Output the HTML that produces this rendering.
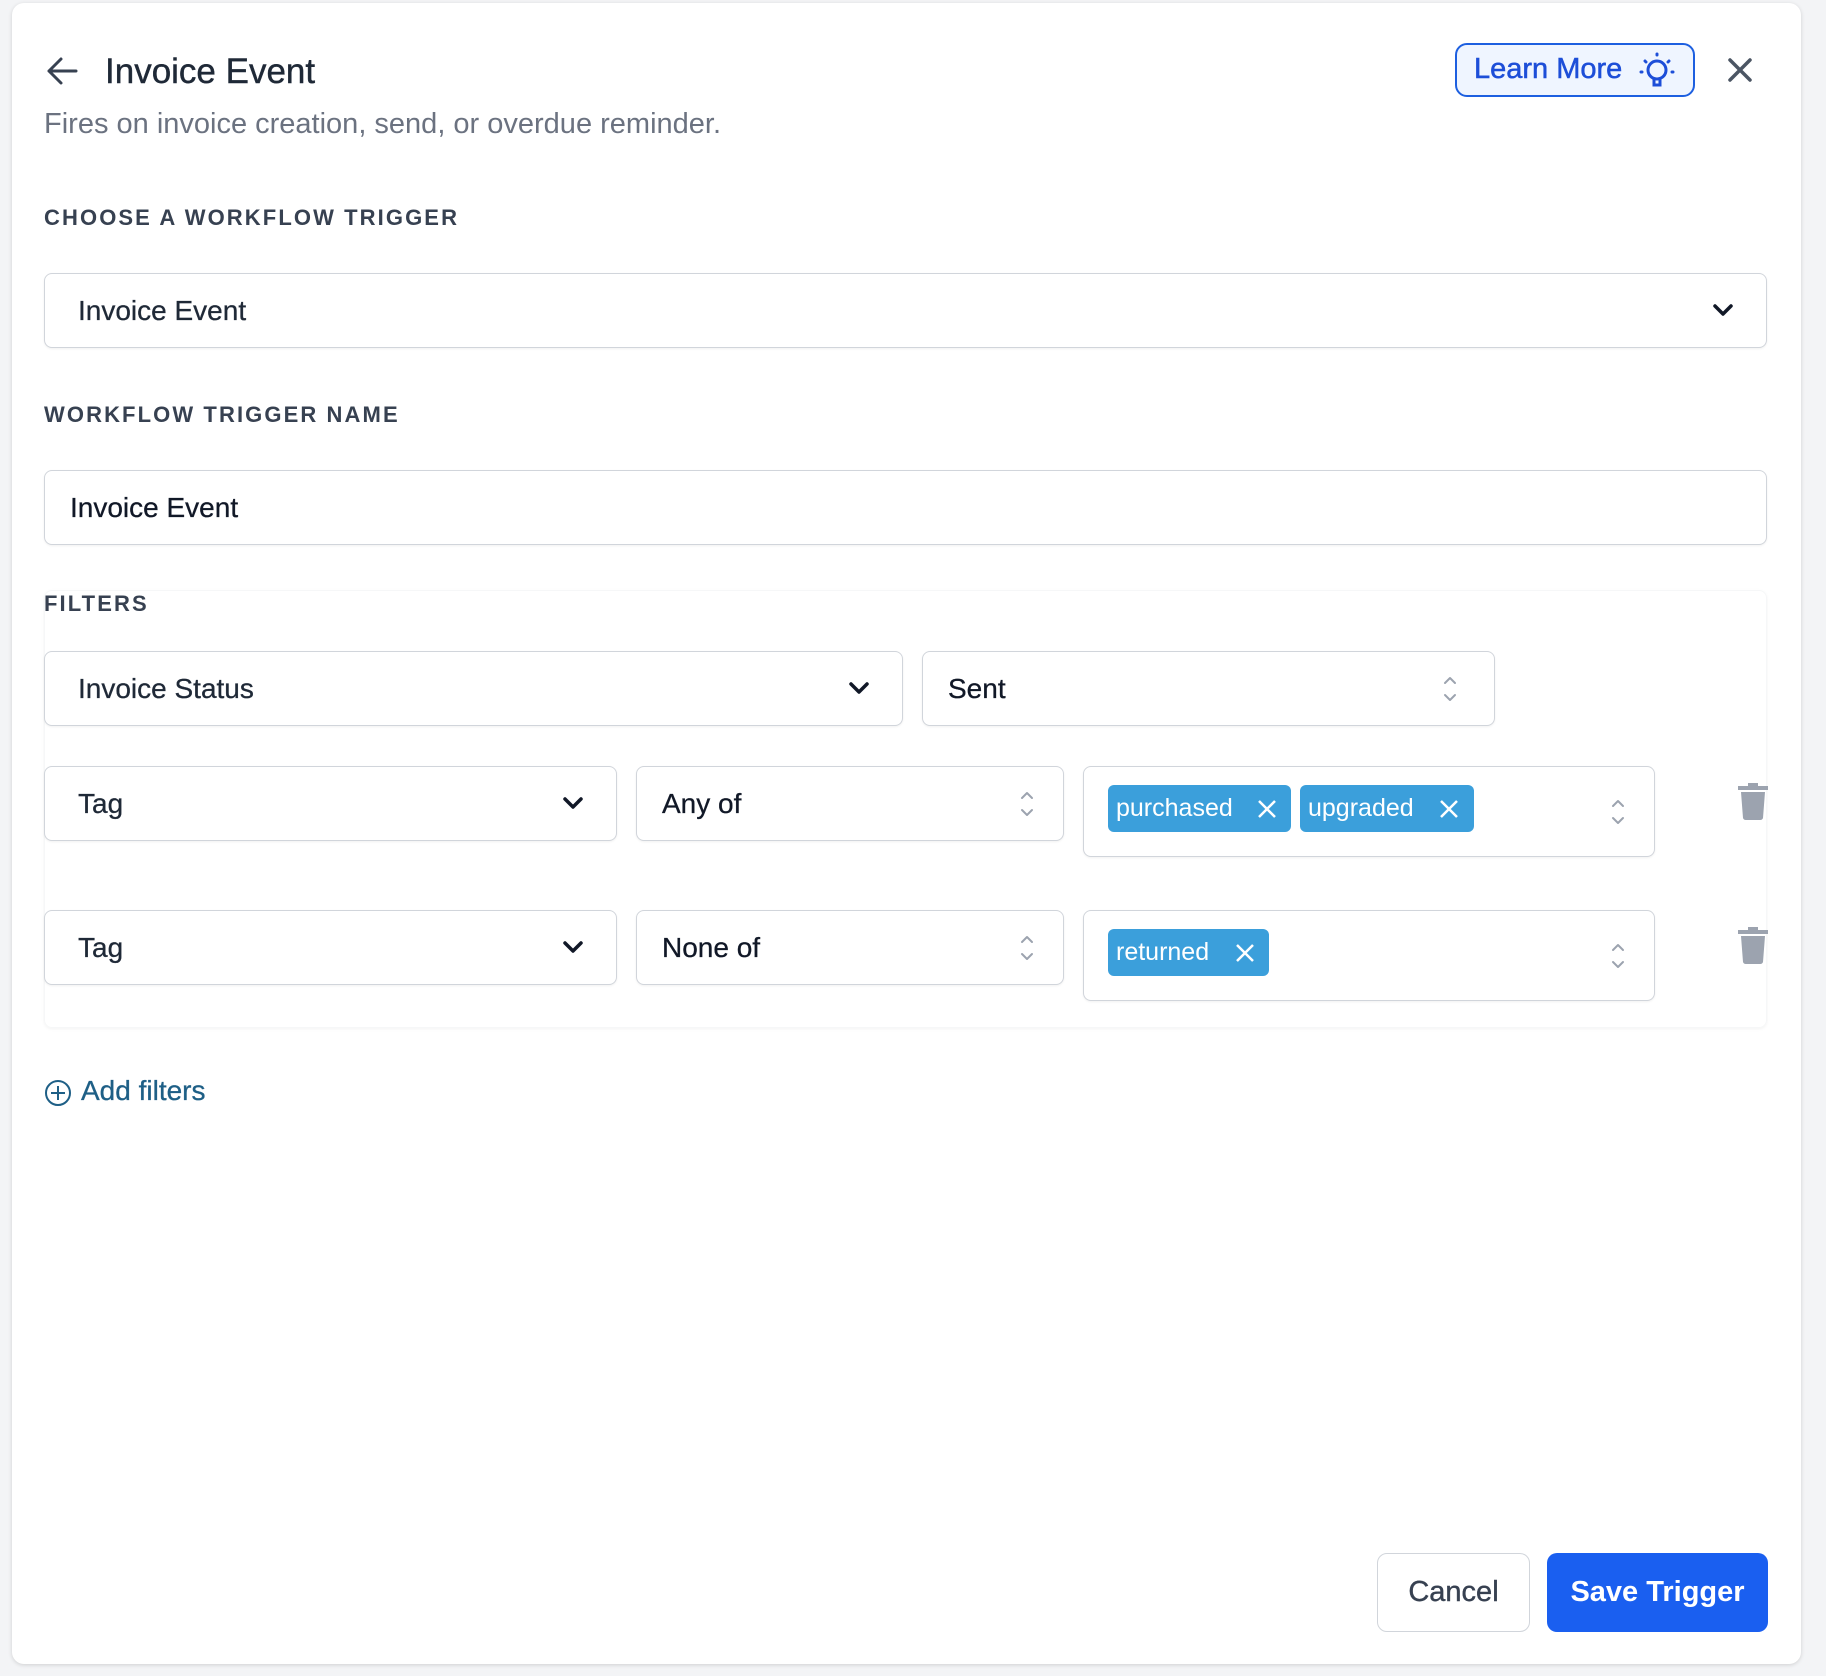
<!DOCTYPE html>
<html><head><meta charset="utf-8">
<style>
*{box-sizing:border-box;margin:0;padding:0}
body{width:1826px;height:1676px;background:#f3f4f6;font-family:"Liberation Sans",sans-serif;position:relative;overflow:hidden}
.card{position:absolute;left:12px;top:3px;width:1789px;height:1661px;background:#fff;border-radius:12px;box-shadow:0 1px 4px rgba(0,0,0,.15)}
.a{position:absolute}
.lbl{position:absolute;left:44px;font-size:22px;font-weight:bold;letter-spacing:2.1px;color:#374151}
.box{position:absolute;border:1.5px solid #d1d5db;border-radius:8px;background:#fff;box-shadow:0 1px 2px rgba(0,0,0,.06)}
.t{position:absolute;font-size:28px;color:#111827;top:50%;transform:translateY(-50%);-webkit-text-stroke:0.3px currentColor}
.chip{position:absolute;background:#3b9fdb;color:#fff;border-radius:6px;font-size:25px;height:47px;line-height:47px;padding-left:8px}
svg.ic{position:absolute}
</style></head><body>
<div class="card"></div>
<svg class="ic" style="left:46px;top:56px" width="32" height="30" viewBox="0 0 32 30"><path d="M30 15H3M15 3L3 15l12 12" fill="none" stroke="#374151" stroke-width="3" stroke-linecap="round" stroke-linejoin="round"/></svg>
<div class="a" style="left:105px;top:52px;font-size:35px;color:#1f2937;-webkit-text-stroke:0.4px #1f2937">Invoice Event</div>
<div class="a" style="left:44px;top:108px;font-size:29px;color:#6b7280">Fires on invoice creation, send, or overdue reminder.</div>
<div class="a" style="left:1455px;top:43px;width:240px;height:54px;border:2px solid #1d5fe0;border-radius:12px;background:#eff5ff"></div>
<div class="a" style="left:1474px;top:53px;font-size:29px;color:#1d4ed8;-webkit-text-stroke:0.5px #1d4ed8">Learn More</div>
<svg class="ic" style="left:1637px;top:48px" width="40" height="46" viewBox="0 0 40 46"><g fill="none" stroke="#1d4ed8" stroke-width="3" stroke-linecap="round"><circle cx="20" cy="22" r="9"/><path d="M17 31v6h6v-6"/><path d="M20 6v1M8 13l1 1M32 13l-1 1M4 24h1M35 24h1"/></g></svg>
<svg class="ic" style="left:1727px;top:57px" width="26" height="26" viewBox="0 0 26 26"><path d="M3 3l20 20M23 3L3 23" stroke="#4b5563" stroke-width="3.5" stroke-linecap="round"/></svg>

<div class="lbl" style="top:205px">CHOOSE A WORKFLOW TRIGGER</div>
<div class="box" style="left:44px;top:273px;width:1723px;height:75px"><span class="t" style="left:33px;color:#1f2937">Invoice Event</span>
<svg class="ic" style="right:32px;top:29px" width="22" height="14" viewBox="0 0 22 14"><path d="M3 3l8 8 8-8" fill="none" stroke="#111827" stroke-width="3.5" stroke-linecap="round" stroke-linejoin="round"/></svg></div>

<div class="lbl" style="top:402px">WORKFLOW TRIGGER NAME</div>
<div class="box" style="left:44px;top:470px;width:1723px;height:75px"><span class="t" style="left:25px">Invoice Event</span></div>

<div class="lbl" style="top:591px">FILTERS</div>
<div class="a" style="left:44px;top:590px;width:1723px;height:438px;border-radius:8px;box-shadow:0 1px 3px rgba(0,0,0,.05);border:1px solid #f6f7f8"></div>

<div class="box" style="left:44px;top:651px;width:859px;height:75px"><span class="t" style="left:33px;color:#1f2937">Invoice Status</span>
<svg class="ic" style="right:32px;top:29px" width="22" height="14" viewBox="0 0 22 14"><path d="M3 3l8 8 8-8" fill="none" stroke="#111827" stroke-width="3.5" stroke-linecap="round" stroke-linejoin="round"/></svg></div>
<div class="box" style="left:922px;top:651px;width:573px;height:75px"><span class="t" style="left:25px">Sent</span>
<svg class="ic" style="right:36px;top:22px" width="16" height="30" viewBox="0 0 16 30"><path d="M3 9l5-5 5 5M3 21l5 5 5-5" fill="none" stroke="#9ca3af" stroke-width="2" stroke-linecap="round" stroke-linejoin="round"/></svg></div>

<div class="box" style="left:44px;top:766px;width:573px;height:75px"><span class="t" style="left:33px;color:#1f2937">Tag</span>
<svg class="ic" style="right:32px;top:29px" width="22" height="14" viewBox="0 0 22 14"><path d="M3 3l8 8 8-8" fill="none" stroke="#111827" stroke-width="3.5" stroke-linecap="round" stroke-linejoin="round"/></svg></div>
<div class="box" style="left:636px;top:766px;width:428px;height:75px"><span class="t" style="left:25px">Any of</span>
<svg class="ic" style="right:28px;top:22px" width="16" height="30" viewBox="0 0 16 30"><path d="M3 9l5-5 5 5M3 21l5 5 5-5" fill="none" stroke="#9ca3af" stroke-width="2" stroke-linecap="round" stroke-linejoin="round"/></svg></div>
<div class="box" style="left:1083px;top:766px;width:572px;height:91px">
<div class="chip" style="left:24px;top:18px;width:183px">purchased</div>
<div class="chip" style="left:216px;top:18px;width:174px">upgraded</div>
<svg class="ic" style="left:173px;top:32px" width="20" height="20" viewBox="0 0 20 20"><path d="M2 2l16 16M18 2L2 18" stroke="#fff" stroke-width="2.5"/></svg>
<svg class="ic" style="left:355px;top:32px" width="20" height="20" viewBox="0 0 20 20"><path d="M2 2l16 16M18 2L2 18" stroke="#fff" stroke-width="2.5"/></svg>
<svg class="ic" style="right:28px;top:30px" width="16" height="30" viewBox="0 0 16 30"><path d="M3 9l5-5 5 5M3 21l5 5 5-5" fill="none" stroke="#9ca3af" stroke-width="2" stroke-linecap="round" stroke-linejoin="round"/></svg></div>
<svg class="ic" style="left:1737px;top:781px" width="32" height="40" viewBox="0 0 32 40"><path d="M11 2h10v3H11zM1 5h30v4H1zM4 11h24l-2 26a3 3 0 0 1-3 2H9a3 3 0 0 1-3-2z" fill="#9ca3af"/></svg>

<div class="box" style="left:44px;top:910px;width:573px;height:75px"><span class="t" style="left:33px;color:#1f2937">Tag</span>
<svg class="ic" style="right:32px;top:29px" width="22" height="14" viewBox="0 0 22 14"><path d="M3 3l8 8 8-8" fill="none" stroke="#111827" stroke-width="3.5" stroke-linecap="round" stroke-linejoin="round"/></svg></div>
<div class="box" style="left:636px;top:910px;width:428px;height:75px"><span class="t" style="left:25px">None of</span>
<svg class="ic" style="right:28px;top:22px" width="16" height="30" viewBox="0 0 16 30"><path d="M3 9l5-5 5 5M3 21l5 5 5-5" fill="none" stroke="#9ca3af" stroke-width="2" stroke-linecap="round" stroke-linejoin="round"/></svg></div>
<div class="box" style="left:1083px;top:910px;width:572px;height:91px">
<div class="chip" style="left:24px;top:18px;width:161px">returned</div>
<svg class="ic" style="left:151px;top:32px" width="20" height="20" viewBox="0 0 20 20"><path d="M2 2l16 16M18 2L2 18" stroke="#fff" stroke-width="2.5"/></svg>
<svg class="ic" style="right:28px;top:30px" width="16" height="30" viewBox="0 0 16 30"><path d="M3 9l5-5 5 5M3 21l5 5 5-5" fill="none" stroke="#9ca3af" stroke-width="2" stroke-linecap="round" stroke-linejoin="round"/></svg></div>
<svg class="ic" style="left:1737px;top:925px" width="32" height="40" viewBox="0 0 32 40"><path d="M11 2h10v3H11zM1 5h30v4H1zM4 11h24l-2 26a3 3 0 0 1-3 2H9a3 3 0 0 1-3-2z" fill="#9ca3af"/></svg>

<svg class="ic" style="left:44px;top:1079px" width="28" height="28" viewBox="0 0 28 28"><g fill="none" stroke="#1e5f86" stroke-width="2"><circle cx="14" cy="14" r="12"/><path d="M14 7v14M7 14h14"/></g></svg>
<div class="a" style="left:81px;top:1075px;font-size:28px;color:#1e5f86;-webkit-text-stroke:0.3px #1e5f86">Add filters</div>

<div class="a" style="left:1377px;top:1553px;width:153px;height:79px;border:1.5px solid #d1d5db;border-radius:10px;background:#fff;font-size:29px;color:#374151;text-align:center;line-height:76px;-webkit-text-stroke:0.4px #374151">Cancel</div>
<div class="a" style="left:1547px;top:1553px;width:221px;height:79px;border-radius:10px;background:#1a5ff0;font-size:29px;color:#fff;text-align:center;line-height:79px;font-weight:bold">Save Trigger</div>
</body></html>
